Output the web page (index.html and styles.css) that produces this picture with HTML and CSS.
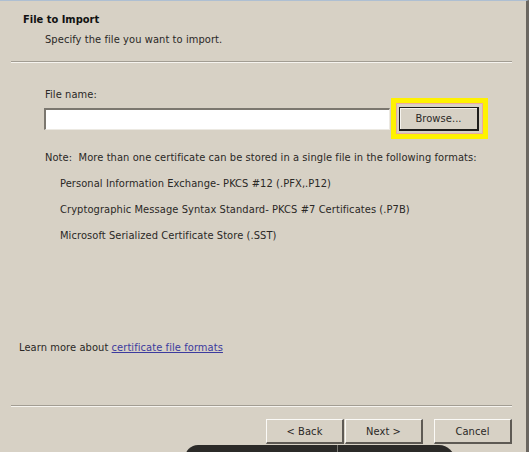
FILE: index.html
```html
<!DOCTYPE html>
<html>
<head>
<meta charset="utf-8">
<link rel="stylesheet" href="styles.css">
</head>
<body>
<div class="dialog">
  <div class="header">
    <div class="title">File to Import</div>
    <div class="subtitle">Specify the file you want to import.</div>
  </div>
  <div class="sep"></div>
  <div class="content">
    <div class="label">File name:</div>
    <div class="file-row">
      <div class="input"></div>
      <div class="btn btn-default highlight">Browse...</div>
    </div>
    <div class="note">Note:&nbsp; More than one certificate can be stored in a single file in the following formats:</div>
    <ul class="formats">
      <li>Personal Information Exchange- PKCS #12 (.PFX,.P12)</li>
      <li>Cryptographic Message Syntax Standard- PKCS #7 Certificates (.P7B)</li>
      <li>Microsoft Serialized Certificate Store (.SST)</li>
    </ul>
  </div>
  <div class="learn">Learn more about <a class="link" href="#">certificate file formats</a></div>
  <div class="sep sep-bottom"></div>
  <div class="buttons">
    <div class="btn">&lt; Back</div>
    <div class="btn">Next &gt;</div>
    <div class="btn btn-cancel">Cancel</div>
  </div>
  <div class="overlay-bar"><span class="bar-divider"></span></div>
</div>
</body>
</html>
```
FILE: styles.css
```css
html, body {
  margin: 0;
  padding: 0;
}
body {
  width: 529px;
  height: 452px;
  overflow: hidden;
  background: #d7d1c5;
  font-family: "DejaVu Sans Condensed", "Liberation Sans", sans-serif;
  font-size: 11px;
  letter-spacing: 0.08px;
  color: #2a2826;
}
.dialog {
  position: relative;
  width: 529px;
  height: 452px;
  box-sizing: border-box;
  border-top: 1px solid #aebfd2;
  border-right: 3px solid #6a6660;
  overflow: hidden;
}
.header {
  padding: 12px 0 0 23px;
  height: 48px;
}
.title {
  font-weight: bold;
  line-height: 14px;
  color: #111;
  letter-spacing: 0;
}
.subtitle {
  margin-top: 6px;
  padding-left: 22px;
  line-height: 14px;
}
.sep {
  margin: 0 14px 0 11px;
  height: 1px;
  background: #a29d93;
  border-bottom: 1px solid #f6f4ef;
}
.content {
  padding: 25px 0 0 45px;
}
.label {
  line-height: 14px;
}
.file-row {
  display: flex;
  align-items: center;
  margin-top: 5px;
  margin-left: -1px;
}
.input {
  width: 343px;
  height: 19px;
  background: #fff;
  border-top: 2px solid #7b776f;
  border-left: 2px solid #7b776f;
  border-right: 1px solid #ece9e2;
  border-bottom: 1px solid #ece9e2;
}
.btn {
  box-sizing: border-box;
  width: 78px;
  height: 25px;
  display: flex;
  align-items: center;
  justify-content: center;
  background: #d7d1c5;
  border-top: 1px solid #fbfaf7;
  border-left: 1px solid #fbfaf7;
  border-right: 2px solid #5e5a54;
  border-bottom: 2px solid #5e5a54;
  color: #2a2826;
}
.btn-default {
  width: 80px;
  height: 24px;
  margin-left: 9px;
  border: 1px solid #1e1d1b;
  border-right-width: 2px;
  border-bottom-width: 2px;
  box-shadow: inset 1px 1px 0 #f6f4ef;
}
.highlight {
  position: relative;
}
.highlight::after {
  content: "";
  position: absolute;
  top: -10px;
  left: -9px;
  right: -11px;
  bottom: -10px;
  border: 5px solid #fff200;
  box-shadow: inset 0 0 0 1px #e9a9a0;
}
.note {
  margin-top: 20px;
  line-height: 14px;
}
.formats {
  list-style: none;
  margin: 0;
  padding: 0 0 0 15px;
}
.formats li {
  margin-top: 12px;
  line-height: 14px;
}
.learn {
  margin: 98px 0 0 19px;
  line-height: 14px;
}
.link {
  color: #3b3a9e;
  text-decoration: underline;
}
.sep-bottom {
  margin-top: 50px;
}
.buttons {
  display: flex;
  justify-content: flex-end;
  padding: 12px 14px 0 0;
}
.buttons .btn + .btn {
  margin-left: 1px;
}
.buttons .btn-cancel {
  margin-left: 11px !important;
}
.overlay-bar {
  position: absolute;
  left: 185px;
  top: 444px;
  width: 270px;
  height: 20px;
  background: #2b2a28;
  border-radius: 13px 16px 0 0;
}
.bar-divider {
  position: absolute;
  left: 152px;
  top: 0;
  width: 1px;
  height: 20px;
  background: #7a7873;
}
```
